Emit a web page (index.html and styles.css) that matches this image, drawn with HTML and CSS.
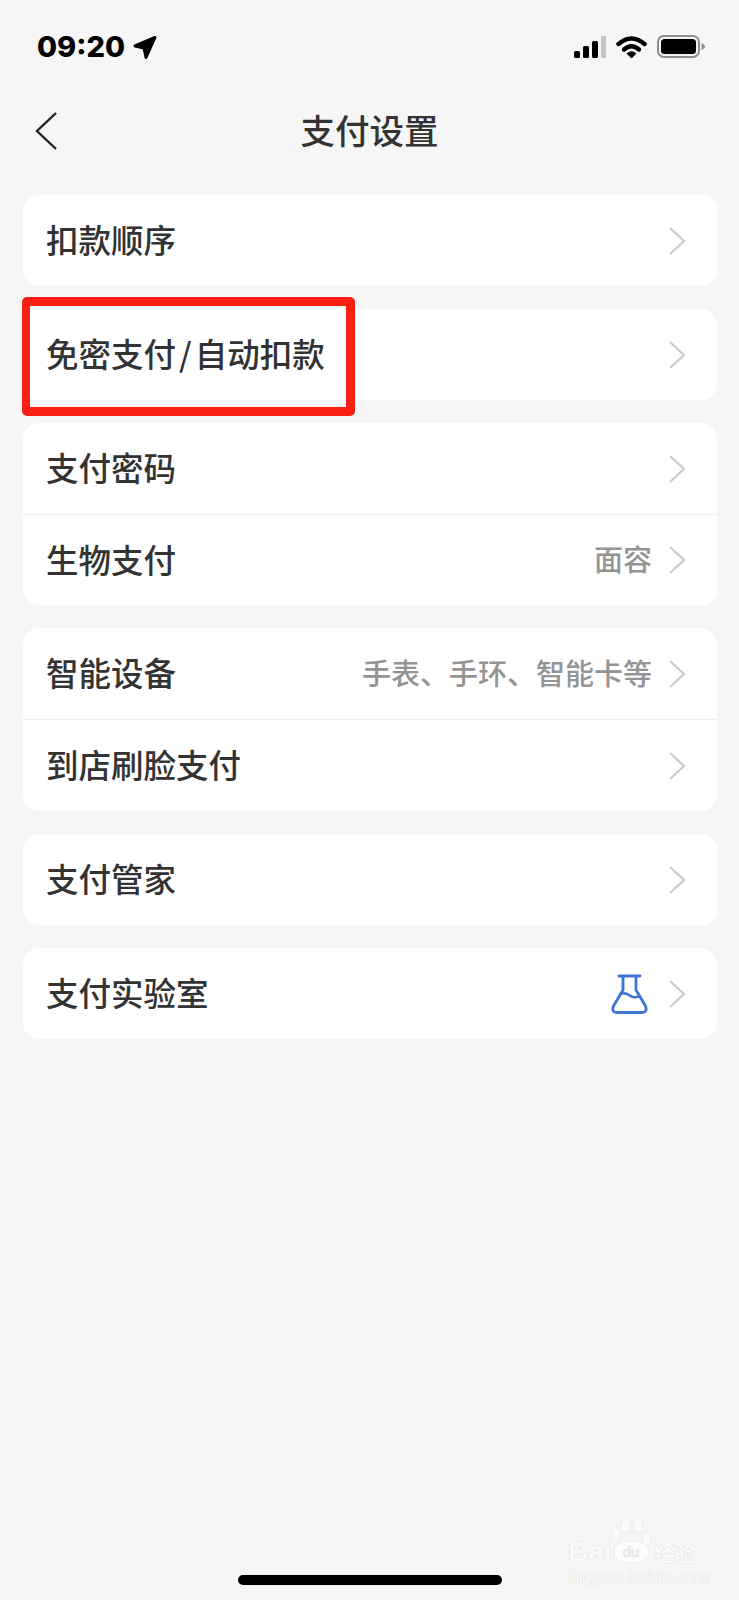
FILE: index.html

```html
<!DOCTYPE html>
<html lang="zh-CN">
<head>
  <meta charset="UTF-8">
  <title>支付设置</title>
  <meta name="viewport" content="width=device-width, initial-scale=1.0">
  <link rel="stylesheet" href="styles.css">
</head>
<body>
  <div class="status-bar">
    <div class="status-left">
      <span class="time">09:20</span>
      <svg class="loc-icon" viewBox="0 0 25 25"><path d="M22 2.500 L2 11 L11 13 L13 22.500 Z" fill="#000" stroke="#000" stroke-width="3" stroke-linejoin="round"/></svg>
    </div>
    <div class="status-right">
      <svg class="signal-icon" viewBox="0 0 32 22">
        <rect x="0" y="15" width="6" height="7" rx="1.500" fill="#000"/>
        <rect x="9" y="10" width="6" height="12" rx="1.500" fill="#000"/>
        <rect x="18" y="5" width="6" height="17" rx="1.500" fill="#000"/>
        <rect x="27" y="0" width="5" height="22" rx="1" fill="#c6c6c6"/>
      </svg>
      <svg class="wifi-icon" viewBox="0 0 31 22">
        <path d="M2.500 8 Q15.500 -3 28.500 8" fill="none" stroke="#000" stroke-width="4.400" stroke-linecap="round"/>
        <path d="M8 13.500 Q15.500 7 23 13.500" fill="none" stroke="#000" stroke-width="4.400" stroke-linecap="round"/>
        <path d="M10.500 17.500 Q15.500 13 20.500 17.500 L15.500 22.500 Z" fill="#000"/>
      </svg>
      <svg class="battery-icon" viewBox="0 0 48 23">
        <rect x="1" y="1" width="41" height="21" rx="6" fill="none" stroke="#8e8e8e" stroke-width="2"/>
        <rect x="4" y="4" width="35" height="15" rx="3.500" fill="#000"/>
        <path d="M44.500 8 Q48 9.500 48 11.500 Q48 13.500 44.500 15 Z" fill="#8e8e8e"/>
      </svg>
    </div>
  </div>

  <div class="nav-bar">
    <svg class="back-icon" viewBox="0 0 24 40"><path d="M22 2 L3 20 L22 38" fill="none" stroke="#222" stroke-width="2.400"/></svg>
    <h1 class="nav-title">支付设置</h1>
  </div>

  <div class="list">
    <div class="card">
      <div class="row">
        <span class="row-label">扣款顺序</span>
        <svg class="chevron" viewBox="0 0 18 30"><path d="M2 2 L16 15 L2 28" fill="none" stroke="#cbcbcb" stroke-width="2.200"/></svg>
      </div>
    </div>

    <div class="card">
      <div class="row">
        <span class="row-label">免密支付<span class="slash">/</span>自动扣款</span>
        <svg class="chevron" viewBox="0 0 18 30"><path d="M2 2 L16 15 L2 28" fill="none" stroke="#cbcbcb" stroke-width="2.200"/></svg>
      </div>
      <div class="red-box"></div>
    </div>

    <div class="card">
      <div class="row">
        <span class="row-label">支付密码</span>
        <svg class="chevron" viewBox="0 0 18 30"><path d="M2 2 L16 15 L2 28" fill="none" stroke="#cbcbcb" stroke-width="2.200"/></svg>
      </div>
      <div class="row row-split">
        <span class="row-label">生物支付</span>
        <span class="row-value">面容</span>
        <svg class="chevron" viewBox="0 0 18 30"><path d="M2 2 L16 15 L2 28" fill="none" stroke="#cbcbcb" stroke-width="2.200"/></svg>
      </div>
    </div>

    <div class="card">
      <div class="row">
        <span class="row-label">智能设备</span>
        <span class="row-value">手表、手环、智能卡等</span>
        <svg class="chevron" viewBox="0 0 18 30"><path d="M2 2 L16 15 L2 28" fill="none" stroke="#cbcbcb" stroke-width="2.200"/></svg>
      </div>
      <div class="row row-split row-tall">
        <span class="row-label">到店刷脸支付</span>
        <svg class="chevron" viewBox="0 0 18 30"><path d="M2 2 L16 15 L2 28" fill="none" stroke="#cbcbcb" stroke-width="2.200"/></svg>
      </div>
    </div>

    <div class="card">
      <div class="row">
        <span class="row-label">支付管家</span>
        <svg class="chevron" viewBox="0 0 18 30"><path d="M2 2 L16 15 L2 28" fill="none" stroke="#cbcbcb" stroke-width="2.200"/></svg>
      </div>
    </div>

    <div class="card">
      <div class="row">
        <span class="row-label">支付实验室</span>
        <svg class="flask-icon" viewBox="0 0 37 40">
          <path d="M8 2 H29 M12 2 V16 L2.500 32 Q0 38.500 6.500 38.500 H30.500 Q37 38.500 34.500 32 L25 16 V2" fill="none" stroke="#3f74d2" stroke-width="2.800" stroke-linecap="round" stroke-linejoin="round"/>
          <path d="M9 20 Q14 18 18 21 Q23 25 29 22" fill="none" stroke="#3f74d2" stroke-width="2.600" stroke-linecap="round"/>
        </svg>
        <svg class="chevron" viewBox="0 0 18 30"><path d="M2 2 L16 15 L2 28" fill="none" stroke="#cbcbcb" stroke-width="2.200"/></svg>
      </div>
    </div>
  </div>

  <div class="watermark">
    <svg class="paw" viewBox="0 0 44 30">
      <ellipse cx="6" cy="15" rx="4.500" ry="6.500" fill="#fcfcfc" stroke="#ececec"/>
      <ellipse cx="16" cy="7" rx="5" ry="6.500" fill="#fcfcfc" stroke="#ececec"/>
      <ellipse cx="28" cy="7" rx="5" ry="6.500" fill="#fcfcfc" stroke="#ececec"/>
      <ellipse cx="37" cy="20" rx="4.500" ry="6.500" fill="#fcfcfc" stroke="#ececec"/>
    </svg>
    <div class="wm-main">
      <span class="wm-bai">Bai</span>
      <span class="wm-du">du</span>
      <span class="wm-cn">经验</span>
    </div>
    <div class="wm-url">jingyan.baidu.com</div>
  </div>

  <div class="home-bar"></div>
</body>
</html>
```

FILE: styles.css

```css
html, body { margin: 0; padding: 0; }
body {
  position: relative;
  width: 739px;
  height: 1600px;
  overflow: hidden;
  background: #f6f6f6;
  color: #333;
  font-family: "Noto Sans CJK SC", "Noto Sans", sans-serif;
}

.status-bar {
  height: 93px;
  box-sizing: border-box;
  padding: 29px 34px 0 37px;
  display: flex;
  justify-content: space-between;
  align-items: flex-start;
}
.status-left { display: flex; align-items: center; gap: 8px; }
.time {
  font-family: Inter, "Liberation Sans", sans-serif;
  font-size: 29px;
  line-height: 36px;
  font-weight: 800;
  color: #000;
}
.loc-icon { width: 25px; height: 25px; }
.status-right { display: flex; align-items: center; gap: 10px; padding-top: 6px; }
.signal-icon { width: 32px; height: 22px; }
.wifi-icon { width: 31px; height: 22px; }
.battery-icon { width: 48px; height: 23px; }

.nav-bar {
  height: 76px;
  display: flex;
  align-items: center;
  justify-content: center;
  position: relative;
}
.back-icon {
  position: absolute;
  left: 34px;
  top: 18px;
  width: 24px;
  height: 40px;
}
.nav-title {
  margin: 0 0 4px;
  font-size: 34.500px;
  font-weight: 500;
  color: #333;
}

.list {
  padding: 26px 22px 0 23px;
  display: flex;
  flex-direction: column;
  gap: 23px;
}
.card {
  position: relative;
  background: #fff;
  border-radius: 16px;
}
.row {
  height: 91px;
  box-sizing: border-box;
  padding: 0 31px 0 23px;
  display: flex;
  align-items: center;
}
.row-split { border-top: 1px solid #eeeeee; }
.row-tall { height: 92px; }
.row-label {
  flex: 1;
  padding-bottom: 4px;
  font-size: 32.500px;
  font-weight: 500;
  color: #333;
  white-space: nowrap;
}
.slash { margin: 0 3px; }
.row-value {
  padding-bottom: 4px;
  font-size: 29px;
  font-weight: 500;
  color: #949494;
  margin-right: 16px;
  white-space: nowrap;
}
.chevron { width: 18px; height: 30px; }
.flask-icon { width: 37px; height: 40px; margin-right: 20px; }

.red-box {
  position: absolute;
  left: -1px;
  top: -12px;
  width: 333px;
  height: 119px;
  box-sizing: border-box;
  border: solid #fa1f14;
  border-width: 9px 9px 9px 8px;
  border-radius: 5px;
}

.watermark {
  position: absolute;
  left: 568px;
  top: 1519px;
  width: 131px;
  color: #fbfbfb;
  text-shadow: 0 0 1px #c9c9c9;
}
.paw { position: absolute; left: 42px; top: 0; width: 44px; height: 30px; }
.wm-main {
  position: relative;
  display: flex;
  align-items: center;
  gap: 2px;
  height: 24px;
  margin-top: 21px;
}
.wm-bai {
  font-family: "Liberation Sans", sans-serif;
  font-size: 28px;
  line-height: 24px;
  font-weight: 700;
}
.wm-du {
  width: 35px;
  height: 20px;
  border-radius: 10px;
  background: #fcfcfc;
  box-shadow: 0 0 1px #d0d0d0;
  text-align: center;
  font-family: "Liberation Sans", sans-serif;
  font-size: 15px;
  line-height: 19px;
  color: #ececec;
}
.wm-cn {
  margin-left: 3px;
  font-size: 21px;
  line-height: 24px;
  font-weight: 700;
}
.wm-url {
  font-family: "Liberation Sans", sans-serif;
  font-size: 17.500px;
  line-height: 20px;
  margin-top: 3px;
  white-space: nowrap;
}

.home-bar {
  position: absolute;
  left: 238px;
  top: 1575px;
  width: 264px;
  height: 10px;
  border-radius: 5px;
  background: #000;
}
```
